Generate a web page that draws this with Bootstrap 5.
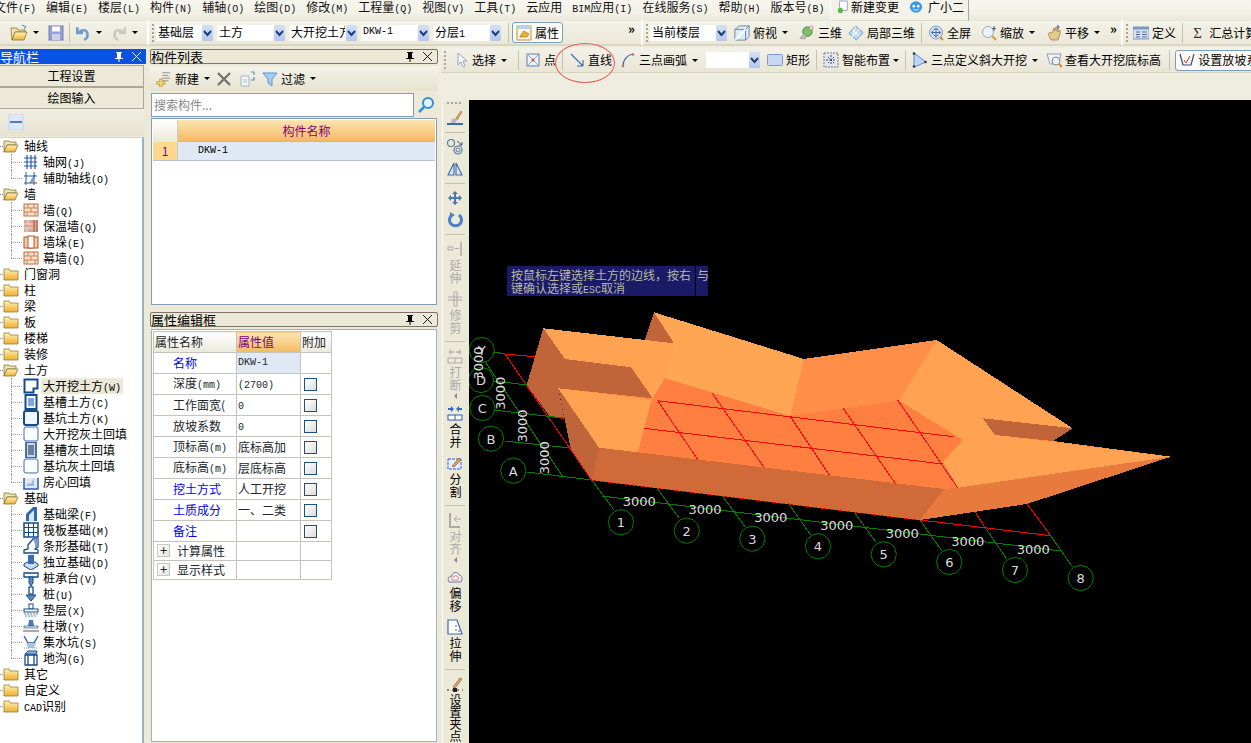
<!DOCTYPE html>
<html lang="zh-CN">

<head>
  <meta charset="UTF-8" />
  <meta name="viewport" content="width=device-width, initial-scale=1" />
  <title>土方 - 大开挖</title>
  <link href="https://cdn.jsdelivr.net/npm/bootstrap@5.3.0/dist/css/bootstrap.min.css" rel="stylesheet" />
  <style>
    html, body { height: 100%; overflow: hidden; }
    body {
      font-family: "Noto Sans CJK SC", "Liberation Sans", sans-serif;
      font-size: 12px;
      line-height: 14px;
      color: #000;
      background: #ece9d8;
    }
    .lat { font-family: "Liberation Mono", monospace; font-size: 10px; }
    .app { width: 1251px; height: 743px; overflow: hidden; position: relative; }
    .ico { width: 16px; height: 16px; flex: none; display: block; }

    /* menu */
    .menu-bar { height: 21px; background: linear-gradient(#f6f6ef, #f3f2e8 60%, #e9e7d8); white-space: nowrap; }
    .menu-list { margin-left: -6px; height: 14px; }
    .menu-item { margin-right: 10px; line-height: 14px; color: #111; }
    .menu-tab { position: absolute; left: 830px; top: 0; width: 139px; height: 21px; padding-left: 6px; gap: 2px; background: #f3f2e8; border-left: 1px solid #fff; border-right: 1px solid #aca899; border-bottom: 1px solid #d8d6c4; }
    .menu-tab .tab-doc { width: 12px; height: 14px; }
    .menu-tab .tab-bot { width: 14px; height: 14px; margin-right: 3px; }

    /* toolbars */
    .tool-row { height: 25px; background: linear-gradient(#f3f2e8, #ebe8d8); border-bottom: 2px solid #d8d5c2; white-space: nowrap; }
    .tool { padding: 0 3px; gap: 3px; height: 100%; flex: none; }
    .tool-caret { width: 0; height: 0; border: 3px solid transparent; border-top: 3px solid #000; border-bottom: 0; margin: 0 5px; flex: none; }
    .tool .tool-caret { margin: 0 5px 0 2px; }
    .tool .caret-snug { margin: 0; }
    .tool .caret-tail { margin: 0 2px 0 2px; }
    .tool-sep { width: 1px; height: 20px; background: #c5c2b0; margin: 0 5px; flex: none; }
    .sep-tight { margin: 0 3px; }
    .tool-gap { width: 2px; height: 25px; background: #fff; margin: 0 1px; flex: none; }
    .grip { width: 2px; height: 18px; margin: 0 2px; flex: none; background: repeating-linear-gradient(#a8a690 0 2px, transparent 2px 4px); }
    .strip-grip { margin-right: 4px; }
    .nudge { margin-left: 2px; }
    .chev { width: 8px; color: #000; font-size: 13px; font-weight: 700; line-height: 10px; margin-top: -8px; flex: none; }
    .chev-a { margin-left: 65px; margin-right: 4px; }
    .chev-b { margin-left: 2px; margin-right: 2px; }
    .sigma { width: 13px; font-size: 15px; font-family: "Liberation Serif", serif; color: #333; flex: none; }
    .cbx { height: 16px; background: #fff; padding-left: 2px; margin-right: 4px; flex: none; overflow: hidden; white-space: nowrap; justify-content: space-between; }
    .cbx-text { overflow: hidden; }
    .cbx-arrow { width: 11px; height: 16px; flex: none; margin-left: 1px; background: linear-gradient(#d5e0f5, #b4c8ec); border-radius: 1px; }
    .cbx-57 { width: 57px; }
    .cbx-68 { width: 68px; }
    .cbx-77 { width: 77px; }
    .cbx-54 { width: 54px; padding: 0; }
    .tool-on { border: 1px solid #7c9bbd; border-radius: 3px; background: #fbfaf4; height: 21px; padding: 0 3px; }
    .first-tools { padding-left: 10px; width: 146px; flex: none; }
    .open-ico { width: 18px; height: 18px; flex: none; }
    .undo-ico { color: #6c9bd2; }
    .redo-ico { color: #c8c8c0; }
    .save-ico { opacity: .8; }

    /* panes */
    .work { height: 697px; }
    .pane-title { height: 15px; line-height: 14px; font-size: 13px; margin-top: 3px; padding-right: 4px; background: #ece9d8; border: 1px solid #77766a; border-radius: 2px; white-space: nowrap; }
    .pane-title .pin { width: 12px; height: 12px; margin-right: 6px; }
    .pane-title .shut { width: 11px; height: 11px; }
    .pane-title.hot { background: #0a52e4; color: #fff; border: 0; border-radius: 0; height: 15px; }
    .nav-pane { width: 146px; flex: none; }
    .nav-btn { height: 22px; width: 144px; line-height: 20px; text-align: center; background: #ece9d8; border: 1px solid #aca899; border-left: 0; }
    .nav-btn-first { margin-top: 1px; }
    .nav-tools { height: 27px; width: 144px; background: linear-gradient(#f1efe3, #e6e3d0); padding: 5px 8px; }
    .nav-tree-box { height: 609px; width: 144px; margin-top: 1px; background: #fff; border-top: 1px solid #d5d3c3; border-right: 2px solid #9cb0c6; overflow: hidden; }
    .tree-row { height: 16px; line-height: 16px; position: relative; gap: 5px; padding-left: 3px; white-space: nowrap; }
    .tree-row::before { content: ""; position: absolute; left: 0; top: 8px; width: 3px; border-top: 1px dotted #999; }
    .tree-kid { padding-left: 23px; gap: 4px; }
    .tree-kid::before { left: 11px; width: 11px; }
    .tree-kid::after { content: ""; position: absolute; left: 11px; top: 0; height: 16px; border-left: 1px dotted #999; }
    .tree-kid:last-child::after { height: 8px; }
    .tree-on { background: #ece9d8; padding: 0 2px; margin-left: -2px; }

    .mid-pane { width: 288px; margin-left: 4px; flex: none; }
    .list-tools { height: 25px; margin-top: 2px; background: linear-gradient(#f4f3ea, #e6e3d0); padding-left: 3px; }
    .list-tools .tool .caret-end { margin-right: 0; }
    .search-row { height: 26px; padding-top: 1px; }
    .search-box { width: 263px; height: 24px; margin-left: 1px; background: #fff; border: 1px solid #7f9db9; line-height: 22px; padding-left: 2px; color: #888; }
    .search-go { margin-left: 3px; width: 18px; height: 18px; }
    .list-box { height: 187px; margin: 1px 1px 0; background: #fff; border: 1px solid #7f9db9; padding: 1px; }
    .part-head { height: 22px; }
    .part-corner { width: 25px; background: linear-gradient(#fff, #ece9d8); border-right: 1px solid #ccc; }
    .part-col { flex: 1; text-align: center; line-height: 21px; color: #800080; background: linear-gradient(#fde5b2, #f2ba64); border-bottom: 1px solid #bbb; }
    .part-row { height: 19px; line-height: 18px; border-bottom: 1px solid #b9c3d0; }
    .part-num { width: 25px; text-align: center; color: #800080; background: #fdd78e; border-right: 1px solid #ccc; }
    .part-name { flex: 1; padding-left: 20px; background: #dfe8f4; }
    .prop-title { margin-top: 7px; }
    .prop-box { height: 413px; margin: 2px 1px 0; background: #fff; border: 1px solid #9cb0c6; padding: 1px; }
    .prop-grid { width: 178px; table-layout: fixed; margin: 0; border-collapse: collapse; }
    .col-name { width: 83px; }
    .col-value { width: 64px; }
    .col-extra { width: 31px; }
    .prop-grid td { height: 21px; padding: 0 1px; line-height: 16px; border: 1px solid #c4c4bf; overflow: hidden; white-space: nowrap; vertical-align: middle; box-shadow: none; background: transparent; }
    .prop-grid .short td { height: 19px; }
    .prop-head-a { background: linear-gradient(#fff, #ebe9dc) !important; }
    .prop-head-b { background: linear-gradient(#fde5b2, #f2ba64) !important; color: #800080; }
    .prop-name { padding-left: 19px !important; }
    .prop-blue { color: #00f; }
    .prop-sel { background: #dfe8f4 !important; }
    .prop-check { display: block; width: 13px; height: 13px; margin-left: 2px; border: 1px solid #1c5180; background: linear-gradient(135deg, #fff, #dcdcd7); }
    .prop-plus { width: 13px; height: 13px; float: left; margin: 1px 7px 0 2px; border: 1px solid #c8c8c0; background: linear-gradient(135deg, #fff, #e4e4dc); line-height: 9px; text-align: center; font-size: 13px; }

    .draw-pane { width: 813px; flex: none; }
    .draw-tools { height: 54px; background: #efede0; padding-top: 2px; }
    .draw-strip { height: 25px; margin-left: 4px; background: linear-gradient(#f3f2e8, #e9e6d6); border-bottom: 1px solid #d5d2bf; white-space: nowrap; overflow: hidden; }
    .draw-body { height: 643px; }
    .vert-tools { width: 31px; flex: none; padding-left: 4px; background: #ece9d8; }
    .vert-in { width: 25px; border-left: 1px solid #fbfaf4; }
    .vert-grip { height: 2px; width: 16px; margin: 2px 0 3px; background: repeating-linear-gradient(90deg, #a8a690 0 2px, transparent 2px 4px); }
    .vert-tool { padding: 3px 0; }
    .vert-word { writing-mode: vertical-rl; line-height: 14px; letter-spacing: 1px; margin-top: 2px; }
    .vert-word-long { letter-spacing: 0; }
    .vert-off { color: #aaa; }
    .vert-sep { width: 20px; height: 1px; margin: 3px 0; background: #c5c2b0; flex: none; }
    .vert-caret { width: 0; height: 0; border: 3px solid transparent; border-right: 3px solid #888; border-left: 0; margin-top: 1px; }
    .draw-board { width: 782px; height: 643px; background: #000; position: relative; overflow: hidden; }
    .draw-board svg { display: block; }
    .board-word { font-family: "DejaVu Sans", sans-serif; font-size: 13px; fill: #ddd; }
    .tip-box { position: absolute; left: 38px; top: 166px; width: 201px; height: 30px; padding: 2px 4px; line-height: 13px; background: #1a1a66; color: #b8b8a4; white-space: nowrap; overflow: hidden; }
    .tip-box::after { content: ""; position: absolute; left: 188px; top: 0; bottom: 0; border-left: 1px solid #000; }
    .tip-tail { position: absolute; left: 190px; top: 2px; }
    .mark-ring { position: absolute; left: 555px; top: 43px; width: 60px; height: 40px; border: 1px solid #e8605a; border-radius: 50%; pointer-events: none; }
  </style>
</head>

<body>
  <svg width="0" height="0" class="position-absolute">
    <defs>
      <linearGradient id="gy" x1="0" y1="0" x2="0" y2="1"><stop offset="0" stop-color="#fff3b8" /><stop offset="1" stop-color="#eeb02e" /></linearGradient>
      <symbol id="i-fc" viewBox="0 0 16 16"><path d="M1 3h5l1 2h8v9H1z" fill="url(#gy)" stroke="#9a7c32" stroke-width=".8" /></symbol>
      <symbol id="i-fo" viewBox="0 0 16 16"><path d="M1 3h5l1 1h6v3H4l-3 7z" fill="#efe2b8" stroke="#8a7636" stroke-width=".8" /><path d="M4 7h11l-3 7H1z" fill="url(#gy)" stroke="#8a7636" stroke-width=".8" /></symbol>
      <symbol id="i-grid" viewBox="0 0 16 16"><path d="M1 4h13M1 8h13M1 12h13M4 1v14M8 1v14M12 1v14" stroke="#2a5db0" stroke-width="1.2" fill="none" /></symbol>
      <symbol id="i-aux" viewBox="0 0 16 16"><path d="M1 6h13M1 13h13M3 2v13M11 2v13" stroke="#2a5db0" fill="none" /><path d="M7 13l5-8" stroke="#2a5db0" /><rect x="8" y="9" width="3" height="4" fill="#999" /></symbol>
      <symbol id="i-brick" viewBox="0 0 16 16"><rect x="1" y="2" width="14" height="12" fill="#fbe3d0" stroke="#c06a3a" /><path d="M1 6h14M1 10h14M5 2v4M11 2v4M8 6v4M4 10v4M12 10v4" stroke="#d07a4a" /></symbol>
      <symbol id="i-warm" viewBox="0 0 16 16"><rect x="1" y="2" width="14" height="12" fill="#d9a79a" /><path d="M1 6h9M1 10h9M5 2v4M4 10v4" stroke="#f1ddd6" /><path d="M11 2v12M14 2v12" stroke="#b0502a" /></symbol>
      <symbol id="i-pier" viewBox="0 0 16 16"><rect x="1" y="3" width="14" height="11" fill="#f7c9a8" stroke="#a8562a" /><rect x="5" y="2" width="6" height="12" fill="#fff" stroke="#b8582c" /></symbol>
      <symbol id="i-pit" viewBox="0 0 16 16"><path d="M1.500 1.500h13v9h-4v4h-9z" fill="#fff" stroke="#174a8c" stroke-width="2" /></symbol>
      <symbol id="i-slot" viewBox="0 0 16 16"><rect x="2.500" y="1" width="11" height="14" fill="#fff" stroke="#174a8c" stroke-width="2" /><rect x="5" y="4" width="6" height="8" fill="#7ea6d8" /></symbol>
      <symbol id="i-hole" viewBox="0 0 16 16"><rect x="1" y="1" width="14" height="14" rx="2" fill="#f2f6fc" stroke="#174a8c" stroke-width="2" /></symbol>
      <symbol id="i-holeb" viewBox="0 0 16 16"><rect x="1" y="1" width="14" height="14" rx="2" fill="#fafcff" stroke="#3a6cb0" /></symbol>
      <symbol id="i-slotd" viewBox="0 0 16 16"><rect x="3" y="0" width="10" height="16" fill="#c9d8ee" stroke="#174a8c" stroke-width="1.500" /><rect x="5" y="3" width="6" height="10" fill="#6f7f98" /></symbol>
      <symbol id="i-room" viewBox="0 0 16 16"><path d="M1 4v11h14V4" fill="#dfe9f6" stroke="#2a5db0" stroke-width="1.500" /><path d="M3 12l3-3 2 1 3-6v8z" fill="#9fb4d2" /></symbol>
      <symbol id="i-beam" viewBox="0 0 16 16"><path d="M3 15V8l7-7h4v14z" fill="#2e67b4" /><path d="M6 15V9l5-5v11z" fill="#dce7f6" /></symbol>
      <symbol id="i-raft" viewBox="0 0 16 16"><rect x="1" y="1" width="14" height="14" fill="#fff" stroke="#174a8c" stroke-width="1.500" /><path d="M1 5.500h14M1 10.500h14M5.500 1v14M10.500 1v14" stroke="#174a8c" /></symbol>
      <symbol id="i-strip" viewBox="0 0 16 16"><path d="M1 15v-3l4-1V7l5-6h5v8l-3 2 3 1v3z" fill="#fff" stroke="#174a8c" stroke-width="1.300" /><path d="M10 1h5v7l-3 2V6z" fill="#7d9cc6" /></symbol>
      <symbol id="i-solo" viewBox="0 0 16 16"><path d="M1 10l7-4 7 4v2l-7 4-7-4z" fill="#c9dcf2" stroke="#174a8c" /><rect x="5" y="1" width="6" height="9" fill="#3a6cb0" /></symbol>
      <symbol id="i-cap" viewBox="0 0 16 16"><path d="M1 3h14v4H1z" fill="#fff" stroke="#174a8c" stroke-width="1.300" /><path d="M6 7h4v6l-2 3-2-3z" fill="#5f86bd" stroke="#174a8c" /></symbol>
      <symbol id="i-pile" viewBox="0 0 16 16"><rect x="6" y="1" width="4" height="7" fill="#fff" stroke="#174a8c" stroke-width="1.300" /><path d="M3 9h10l-5 6z" fill="#5f86bd" stroke="#174a8c" /></symbol>
      <symbol id="i-pad" viewBox="0 0 16 16"><rect x="6" y="2" width="4" height="5" fill="#fff" stroke="#174a8c" /><rect x="1" y="7" width="14" height="3" fill="#fff" stroke="#174a8c" /><path d="M1 12h14M2 14h12" stroke="#5f86bd" stroke-dasharray="2 1" /></symbol>
      <symbol id="i-stub" viewBox="0 0 16 16"><path d="M6 2h4l1 6H5z" fill="#4c78b6" /><rect x="1" y="8" width="14" height="2" fill="#dce7f6" stroke="#174a8c" stroke-width=".6" /><rect x="0" y="12" width="16" height="2" fill="#aaa" /></symbol>
      <symbol id="i-sump" viewBox="0 0 16 16"><path d="M1 2l4 7h6l4-7" fill="none" stroke="#2a5db0" stroke-width="1.300" /><path d="M3 9h10l-2 5H5z" fill="#a8c4e6" /><path d="M1 14h14" stroke="#7da0d0" stroke-dasharray="1 1" /></symbol>
      <symbol id="i-ditch" viewBox="0 0 16 16"><path d="M2 4l3-3h9l-1 3z" fill="#9bb7dd" stroke="#174a8c" /><path d="M2 5h12v10H2z" fill="#fff" stroke="#174a8c" stroke-width="1.300" /><path d="M5 5v10M11 5v10" stroke="#174a8c" stroke-width="1.300" /></symbol>
      <symbol id="i-minus" viewBox="0 0 16 16"><rect x="1" y="0" width="14" height="16" fill="#dfe8fb" stroke="#c3d2f0" /><rect x="2" y="7" width="12" height="2" fill="#4a7fb8" /></symbol>
      <symbol id="i-pin" viewBox="0 0 12 12"><path d="M3 1h6v1H8v5h2v1H6.500v3h-1V8H2V7h2V2H3z" fill="currentColor" /></symbol>
      <symbol id="i-shut" viewBox="0 0 11 11"><path d="M1 1l9 9M10 1l-9 9" stroke="currentColor" stroke-width=".9" fill="none" /></symbol>
      <symbol id="i-new" viewBox="0 0 18 18"><path d="M7 2h9M7 5h7M7 8h9M7 11h7" stroke="#8a8a8a" /><path d="M4 9h3v3h3v3H7v3H4v-3H1v-3h3z" fill="#f2d56a" stroke="#b08a20" stroke-width=".7" /></symbol>
      <symbol id="i-del" viewBox="0 0 16 16"><path d="M2 2l12 12M14 2L2 14" stroke="#707070" stroke-width="2.200" /></symbol>
      <symbol id="i-copy" viewBox="0 0 16 16"><path d="M1 5h8v10H1z" fill="#f4f4f4" stroke="#a8b4c4" /><path d="M3 9h4M3 11h4" stroke="#b8c0c8" /><path d="M11 1h3M14 1v3M11 9h3v-3" stroke="#5e8ac4" fill="none" stroke-width="1.200" /></symbol>
      <symbol id="i-filter" viewBox="0 0 16 16"><path d="M1 2h14L10 8v7l-4-3V8z" fill="#a9cdf0" stroke="#5d93cc" /></symbol>
      <symbol id="i-search" viewBox="0 0 18 18"><circle cx="11" cy="7" r="5" fill="#e4f2fc" stroke="#2f8fd8" stroke-width="2" /><path d="M7 11l-5 5" stroke="#2f8fd8" stroke-width="2.500" /></symbol>
      <symbol id="i-open" viewBox="0 0 18 18"><path d="M1 4h6l1 2h7v2H5l-3 8z" fill="#f1e4b8" stroke="#8a7636" stroke-width=".8" /><path d="M5 8h12l-3 8H2z" fill="url(#gy)" stroke="#8a7636" stroke-width=".8" /><path d="M12 1l4 2-2 2" fill="none" stroke="#4a7fb8" /></symbol>
      <symbol id="i-save" viewBox="0 0 16 16"><rect x="1" y="1" width="14" height="14" fill="#7f8ed4" stroke="#5a64a8" /><rect x="4" y="1.500" width="8" height="5" fill="#fff" /><rect x="4" y="9" width="8" height="6" fill="#c8cce8" /></symbol>
      <symbol id="i-undo" viewBox="0 0 14 14"><path d="M2 2v5h5M3 7c3-4 8-3 8 2 0 2-1 3-3 4" fill="none" stroke="currentColor" stroke-width="2.200" /></symbol>
      <symbol id="i-redo" viewBox="0 0 14 14"><path d="M12 2v5H7M11 7C8 3 3 4 3 9c0 2 1 3 3 4" fill="none" stroke="currentColor" stroke-width="2.200" /></symbol>
      <symbol id="i-props" viewBox="0 0 16 16"><rect x="1" y="1" width="14" height="14" fill="#fdf6e0" stroke="#d88a30" /><rect x="1" y="1" width="14" height="3" fill="#bcd0ea" /><path d="M4 11l4-5 5 3-2 3H4z" fill="#e8b030" stroke="#8a6a20" stroke-width=".6" /></symbol>
      <symbol id="i-cube" viewBox="0 0 18 18"><path d="M1 5l5-4h11v12l-4 4H1z" fill="#dfeaf6" stroke="#5d7f9e" /><path d="M1 5h12v12M13 5l4-4" fill="none" stroke="#5d7f9e" /><path d="M1 17l12-12" stroke="#fff" stroke-width="2" /></symbol>
      <symbol id="i-3d" viewBox="0 0 17 17"><circle cx="9" cy="7" r="5" fill="#7cc26a" stroke="#3a8a3a" /><path d="M1 14l5-5 2 3-2 3z" fill="#bcbcbc" stroke="#888" stroke-width=".6" /><circle cx="13" cy="3" r="2" fill="#eee" stroke="#c66" stroke-width=".7" /></symbol>
      <symbol id="i-part3d" viewBox="0 0 17 17"><path d="M1 9l7-8 8 7-7 8z" fill="#bcd6f0" stroke="#6d96c4" /><path d="M4.500 5l8 7M8 1.500l-3.500 11M12 4.500l-7 8" stroke="#fff" /></symbol>
      <symbol id="i-full" viewBox="0 0 16 16"><circle cx="8" cy="7.500" r="6.500" fill="#d4e2f4" stroke="#7d9ac0" /><path d="M8 3v9M3.500 7.500h9M8 3l-2 2M8 3l2 2M8 12l-2-2M8 12l2-2M3.500 7.500l2-2M3.500 7.500l2 2M12.500 7.500l-2-2M12.500 7.500l-2 2" stroke="#3a5f98" fill="none" stroke-width=".9" /><path d="M12 12l3 3" stroke="#d88a30" stroke-width="2" /></symbol>
      <symbol id="i-zoom" viewBox="0 0 16 16"><circle cx="7" cy="7" r="5.500" fill="#eef3fa" stroke="#9aa8b8" /><path d="M11 11l4 4" stroke="#d8a030" stroke-width="2.200" /><path d="M13 1v5M11 3.500h4" stroke="#506070" /></symbol>
      <symbol id="i-hand" viewBox="0 0 16 16"><path d="M2 9l3 6h7l2-6V5l-2 2V3l-2 3V2L8 6V3L6 8 4 7z" fill="#e6c98c" stroke="#9a8450" stroke-width=".8" /><path d="M12 0v4M10.500 2h3" stroke="#506070" /></symbol>
      <symbol id="i-def" viewBox="0 0 16 16"><rect x="0" y="2" width="16" height="12" fill="#d6e2f4" stroke="#7b98c0" /><rect x="0" y="2" width="16" height="2.500" fill="#7b98c0" /><path d="M3 7h4M3 9.500h4M3 12h4M9 7h5M9 9.500h5M9 12h5" stroke="#4d6a94" /></symbol>
      <symbol id="i-pick" viewBox="0 0 16 16"><path d="M5 1v12l3-3 2 5 2-1-2-5h4z" fill="#f6f6f6" stroke="#9aa6c0" /></symbol>
      <symbol id="i-point" viewBox="0 0 16 16"><rect x="2" y="2" width="12" height="12" fill="#eef2f8" stroke="#5e7fb0" /><path d="M2 2l12 12M14 2L2 14" stroke="#8ea6c8" /><circle cx="8" cy="8" r="1.500" fill="#d44" /></symbol>
      <symbol id="i-line" viewBox="0 0 16 16"><path d="M2 2l12 12M14 14V8M14 14H8" fill="none" stroke="#3d6aa8" stroke-width="1.100" /></symbol>
      <symbol id="i-arc" viewBox="0 0 16 16"><path d="M3 14C3 8 7 3 13 2" fill="none" stroke="#3d6aa8" stroke-width="1.200" /><circle cx="3" cy="14" r="1.300" fill="#d66" /><circle cx="13" cy="2.500" r="1.300" fill="#d66" /></symbol>
      <symbol id="i-rect" viewBox="0 0 16 16"><rect x=".5" y="2.500" width="15" height="11" rx="1" fill="#c6d8f2" stroke="#7d9ac6" /></symbol>
      <symbol id="i-smart" viewBox="0 0 16 16"><rect x="1" y="1" width="14" height="14" fill="#e4e8ee" stroke="#707a88" stroke-dasharray="2 1" /><path d="M8 3v10M3 8h10M5 5l6 6M11 5l-6 6" stroke="#28486e" stroke-dasharray="2 1.500" /></symbol>
      <symbol id="i-tri" viewBox="0 0 16 16"><path d="M2 1v14l12-5z" fill="#bcd8f4" stroke="#5e8ac4" /><circle cx="2" cy="1.500" r="1.300" fill="#333" /><circle cx="2" cy="14.500" r="1.300" fill="#333" /><circle cx="13.500" cy="10" r="1.300" fill="#333" /></symbol>
      <symbol id="i-check" viewBox="0 0 16 16"><path d="M1 2h14l-3 10H4z" fill="#f1f4f8" stroke="#88a0bc" /><circle cx="10" cy="9" r="4" fill="#eef3fa" stroke="#7d8a9a" /><path d="M13 12l3 3" stroke="#d88a30" stroke-width="2" /></symbol>
      <symbol id="i-slope" viewBox="0 0 16 16"><path d="M1 2l3 11h8l3-11" fill="none" stroke="#2a5080" stroke-width="1.200" /><path d="M5 8l2 3 4-7" fill="none" stroke="#d83030" /></symbol>
      <symbol id="i-brush" viewBox="0 0 16 16"><path d="M9 8l5-7 1 1-5 8z" fill="#e8a050" stroke="#9a6a30" stroke-width=".6" /><path d="M5 9l4-1 1 2-2 3H4z" fill="#b0b8c8" /><path d="M0 14h16" stroke="#3d6aa8" stroke-width="2" /></symbol>
      <symbol id="i-offs" viewBox="0 0 16 16"><circle cx="4" cy="4" r="3.500" fill="none" stroke="#5a7aa8" stroke-width="1.200" /><circle cx="11" cy="11" r="4" fill="none" stroke="#5a7aa8" stroke-width="1.200" /><circle cx="11" cy="11" r="2" fill="none" stroke="#5a7aa8" /><path d="M10 2l5 4M15 3v3h-3" fill="none" stroke="#3d5a88" /></symbol>
      <symbol id="i-mirror" viewBox="0 0 16 16"><path d="M7 2v12H1zM9 2v12h6z" fill="#dce7f6" stroke="#3d6aa8" stroke-width="1.100" /></symbol>
      <symbol id="i-move" viewBox="0 0 16 16"><path d="M8 1l3 3H9v3h3V5l3 3-3 3V9H9v3h2l-3 3-3-3h2V9H4v2L1 8l3-3v2h3V4H5z" fill="#4a78b4" /></symbol>
      <symbol id="i-spin" viewBox="0 0 16 16"><path d="M5 3a6 6 0 1 0 7 0" fill="none" stroke="#4a7fcc" stroke-width="3" /><path d="M3 0l5 3-5 3z" fill="#4a7fcc" /></symbol>
      <symbol id="i-ext" viewBox="0 0 16 16"><path d="M14 1v14" stroke="#aaa" stroke-width="1.500" /><path d="M1 6h5v3H1zM8 7.500h4" stroke="#aaa" fill="none" /></symbol>
      <symbol id="i-trim" viewBox="0 0 16 16"><rect x="7" y="1" width="3" height="14" fill="none" stroke="#aaa" /><path d="M1 6h14M1 9h14" stroke="#aaa" /></symbol>
      <symbol id="i-break" viewBox="0 0 16 16"><path d="M1 4l3-3v2h3v2H4v2zM15 4l-3-3v2H9v2h3v2z" fill="#bbb" /><rect x="1" y="10" width="14" height="5" fill="none" stroke="#aaa" /><path d="M8 10v5" stroke="#aaa" /></symbol>
      <symbol id="i-join" viewBox="0 0 16 16"><path d="M1 3h3V1l3 3-3 3V5H1zM15 3h-3V1L9 4l3 3V5h3z" fill="#2a70c8" /><rect x="1" y="10" width="14" height="5" fill="#fff" stroke="#2a5db0" /><path d="M8 10v5" stroke="#2a5db0" /></symbol>
      <symbol id="i-split" viewBox="0 0 16 16"><rect x="1" y="4" width="13" height="10" fill="#e8f0fc" stroke="#2060e0" stroke-dasharray="3 1" /><path d="M5 11l7-8 2 2-7 7z" fill="#e8a050" stroke="#7a5a30" stroke-width=".7" /></symbol>
      <symbol id="i-align" viewBox="0 0 16 16"><path d="M3 1v14h10" fill="none" stroke="#aaa" stroke-width="2" /><path d="M7 7h7M7 7l3-3M7 7l3 3" stroke="#aaa" fill="none" /></symbol>
      <symbol id="i-cloud" viewBox="0 0 16 16"><path d="M2 13c-2-3 0-6 3-6 0-4 6-5 7-1 3 0 4 4 2 7z" fill="#fbeaea" stroke="#5a80b0" /><path d="M5 11c-1-2 0-3 2-3 1-2 3-2 3 0 2 0 2 2 1 3z" fill="#fff" stroke="#d88080" /></symbol>
      <symbol id="i-pull" viewBox="0 0 16 16"><path d="M1 1h9l5 14H1z" fill="#fff" stroke="#3d6aa8" stroke-width="1.200" /><path d="M9 6v2M9 10v2M11 12h2" stroke="#666" /></symbol>
      <symbol id="i-grab" viewBox="0 0 16 16"><path d="M6 11l7-9 2 1-7 9z" fill="#e8b060" stroke="#7a5a30" stroke-width=".7" /><path d="M0 14h16" stroke="#222" stroke-dasharray="2 3" /><rect x="6" y="12" width="4" height="4" fill="#222" /></symbol>
      <symbol id="i-doc" viewBox="0 0 14 14"><path d="M3 0h9v11H3z" fill="#fff" stroke="#88a0bc" /><circle cx="4" cy="11" r="3" fill="#5ab84a" /></symbol>
      <symbol id="i-bot" viewBox="0 0 16 16"><ellipse cx="8" cy="8" rx="7" ry="6.500" fill="#3a9ae8" /><circle cx="5.500" cy="7" r="1.500" fill="#fff" /><circle cx="10.500" cy="7" r="1.500" fill="#fff" /><path d="M5 10.500c2 1.500 4 1.500 6 0" fill="none" stroke="#fff" /></symbol>
      <symbol id="i-chev" viewBox="0 0 11 16"><path d="M2 6l3.500 4L9 6" fill="none" stroke="#1c3f78" stroke-width="2" /></symbol>
    </defs>
  </svg>

  <div class="app">
    <div class="menu-bar">
      <div class="menu-list d-flex">
        <span class="menu-item">文件<span class="lat">(F)</span></span>
        <span class="menu-item">编辑<span class="lat">(E)</span></span>
        <span class="menu-item">楼层<span class="lat">(L)</span></span>
        <span class="menu-item">构件<span class="lat">(N)</span></span>
        <span class="menu-item">辅轴<span class="lat">(O)</span></span>
        <span class="menu-item">绘图<span class="lat">(D)</span></span>
        <span class="menu-item">修改<span class="lat">(M)</span></span>
        <span class="menu-item">工程量<span class="lat">(Q)</span></span>
        <span class="menu-item">视图<span class="lat">(V)</span></span>
        <span class="menu-item">工具<span class="lat">(T)</span></span>
        <span class="menu-item">云应用</span>
        <span class="menu-item"><span class="lat">BIM</span>应用<span class="lat">(I)</span></span>
        <span class="menu-item">在线服务<span class="lat">(S)</span></span>
        <span class="menu-item">帮助<span class="lat">(H)</span></span>
        <span class="menu-item">版本号<span class="lat">(B)</span></span>
      </div>
      <div class="menu-tab d-flex align-items-start">
        <svg class="tab-doc"><use href="#i-doc" /></svg><span class="me-2">新建变更</span>
        <svg class="tab-bot"><use href="#i-bot" /></svg><span>广小二</span>
      </div>
    </div>

    <div class="tool-row d-flex align-items-center">
      <div class="first-tools d-flex align-items-center">
        <svg class="open-ico"><use href="#i-open" /></svg>
        <span class="tool-caret"></span>
        <svg class="ico save-ico ms-1"><use href="#i-save" /></svg>
        <span class="tool-sep"></span>
        <svg class="ico undo-ico"><use href="#i-undo" /></svg>
        <span class="tool-caret"></span>
        <svg class="ico redo-ico ms-1"><use href="#i-redo" /></svg>
        <span class="tool-caret"></span>
      </div>
      <span class="tool-gap"></span>
      <span class="grip"></span>
      <div class="cbx cbx-57 d-flex"><span class="cbx-text">基础层</span><svg class="cbx-arrow"><use href="#i-chev" /></svg></div>
      <div class="cbx cbx-68 d-flex"><span class="cbx-text">土方</span><svg class="cbx-arrow"><use href="#i-chev" /></svg></div>
      <div class="cbx cbx-68 d-flex"><span class="cbx-text">大开挖土方</span><svg class="cbx-arrow"><use href="#i-chev" /></svg></div>
      <div class="cbx cbx-68 d-flex"><span class="cbx-text lat">DKW-1</span><svg class="cbx-arrow"><use href="#i-chev" /></svg></div>
      <div class="cbx cbx-68 d-flex"><span class="cbx-text">分层<span class="lat">1</span></span><svg class="cbx-arrow"><use href="#i-chev" /></svg></div>
      <span class="tool-sep sep-tight"></span>
      <div class="tool tool-on d-flex align-items-center"><svg class="ico"><use href="#i-props" /></svg><span>属性</span></div>
      <span class="chev chev-a">»</span>
      <span class="tool-gap"></span>
      <span class="grip"></span>
      <div class="cbx cbx-77 d-flex"><span class="cbx-text">当前楼层</span><svg class="cbx-arrow"><use href="#i-chev" /></svg></div>
      <div class="tool d-flex align-items-center"><svg class="ico"><use href="#i-cube" /></svg><span>俯视</span><span class="tool-caret"></span></div>
      <div class="tool d-flex align-items-center"><svg class="ico"><use href="#i-3d" /></svg><span>三维</span></div>
      <div class="tool d-flex align-items-center"><svg class="ico"><use href="#i-part3d" /></svg><span>局部三维</span></div>
      <span class="tool-sep sep-tight"></span>
      <div class="tool d-flex align-items-center"><svg class="ico"><use href="#i-full" /></svg><span>全屏</span></div>
      <div class="tool d-flex align-items-center ms-1"><svg class="ico"><use href="#i-zoom" /></svg><span>缩放</span><span class="tool-caret"></span></div>
      <div class="tool d-flex align-items-center"><svg class="ico"><use href="#i-hand" /></svg><span>平移</span><span class="tool-caret"></span></div>
      <span class="chev chev-b">»</span>
      <span class="tool-gap"></span>
      <span class="grip"></span>
      <div class="tool d-flex align-items-center"><svg class="ico"><use href="#i-def" /></svg><span>定义</span></div>
      <span class="tool-sep sep-tight"></span>
      <div class="tool d-flex align-items-center"><span class="sigma ms-1">Σ</span><span>汇总计算</span></div>
    </div>

    <div class="work d-flex">
      <aside class="nav-pane">
        <div class="pane-title hot d-flex align-items-center"><span class="flex-grow-1">导航栏</span><svg class="pin"><use href="#i-pin" /></svg><svg class="shut"><use href="#i-shut" /></svg></div>
        <div class="nav-btn nav-btn-first">工程设置</div>
        <div class="nav-btn">绘图输入</div>
        <div class="nav-tools"><svg class="ico"><use href="#i-minus" /></svg></div>
        <div class="nav-tree-box">
          <ul class="list-unstyled mb-0">
            <li>
              <div class="tree-row d-flex"><svg class="ico"><use href="#i-fo" /></svg><span>轴线</span></div>
              <ul class="list-unstyled mb-0">
                <li class="tree-row tree-kid d-flex"><svg class="ico"><use href="#i-grid" /></svg><span>轴网<span class="lat">(J)</span></span></li>
                <li class="tree-row tree-kid d-flex"><svg class="ico"><use href="#i-aux" /></svg><span>辅助轴线<span class="lat">(O)</span></span></li>
              </ul>
            </li>
            <li>
              <div class="tree-row d-flex"><svg class="ico"><use href="#i-fo" /></svg><span>墙</span></div>
              <ul class="list-unstyled mb-0">
                <li class="tree-row tree-kid d-flex"><svg class="ico"><use href="#i-brick" /></svg><span>墙<span class="lat">(Q)</span></span></li>
                <li class="tree-row tree-kid d-flex"><svg class="ico"><use href="#i-warm" /></svg><span>保温墙<span class="lat">(Q)</span></span></li>
                <li class="tree-row tree-kid d-flex"><svg class="ico"><use href="#i-pier" /></svg><span>墙垛<span class="lat">(E)</span></span></li>
                <li class="tree-row tree-kid d-flex"><svg class="ico"><use href="#i-brick" /></svg><span>幕墙<span class="lat">(Q)</span></span></li>
              </ul>
            </li>
            <li class="tree-row d-flex"><svg class="ico"><use href="#i-fc" /></svg><span>门窗洞</span></li>
            <li class="tree-row d-flex"><svg class="ico"><use href="#i-fc" /></svg><span>柱</span></li>
            <li class="tree-row d-flex"><svg class="ico"><use href="#i-fc" /></svg><span>梁</span></li>
            <li class="tree-row d-flex"><svg class="ico"><use href="#i-fc" /></svg><span>板</span></li>
            <li class="tree-row d-flex"><svg class="ico"><use href="#i-fc" /></svg><span>楼梯</span></li>
            <li class="tree-row d-flex"><svg class="ico"><use href="#i-fc" /></svg><span>装修</span></li>
            <li>
              <div class="tree-row d-flex"><svg class="ico"><use href="#i-fo" /></svg><span>土方</span></div>
              <ul class="list-unstyled mb-0">
                <li class="tree-row tree-kid d-flex"><svg class="ico"><use href="#i-pit" /></svg><span class="tree-on">大开挖土方<span class="lat">(W)</span></span></li>
                <li class="tree-row tree-kid d-flex"><svg class="ico"><use href="#i-slot" /></svg><span>基槽土方<span class="lat">(C)</span></span></li>
                <li class="tree-row tree-kid d-flex"><svg class="ico"><use href="#i-hole" /></svg><span>基坑土方<span class="lat">(K)</span></span></li>
                <li class="tree-row tree-kid d-flex"><svg class="ico"><use href="#i-holeb" /></svg><span>大开挖灰土回填</span></li>
                <li class="tree-row tree-kid d-flex"><svg class="ico"><use href="#i-slotd" /></svg><span>基槽灰土回填</span></li>
                <li class="tree-row tree-kid d-flex"><svg class="ico"><use href="#i-holeb" /></svg><span>基坑灰土回填</span></li>
                <li class="tree-row tree-kid d-flex"><svg class="ico"><use href="#i-room" /></svg><span>房心回填</span></li>
              </ul>
            </li>
            <li>
              <div class="tree-row d-flex"><svg class="ico"><use href="#i-fo" /></svg><span>基础</span></div>
              <ul class="list-unstyled mb-0">
                <li class="tree-row tree-kid d-flex"><svg class="ico"><use href="#i-beam" /></svg><span>基础梁<span class="lat">(F)</span></span></li>
                <li class="tree-row tree-kid d-flex"><svg class="ico"><use href="#i-raft" /></svg><span>筏板基础<span class="lat">(M)</span></span></li>
                <li class="tree-row tree-kid d-flex"><svg class="ico"><use href="#i-strip" /></svg><span>条形基础<span class="lat">(T)</span></span></li>
                <li class="tree-row tree-kid d-flex"><svg class="ico"><use href="#i-solo" /></svg><span>独立基础<span class="lat">(D)</span></span></li>
                <li class="tree-row tree-kid d-flex"><svg class="ico"><use href="#i-cap" /></svg><span>桩承台<span class="lat">(V)</span></span></li>
                <li class="tree-row tree-kid d-flex"><svg class="ico"><use href="#i-pile" /></svg><span>桩<span class="lat">(U)</span></span></li>
                <li class="tree-row tree-kid d-flex"><svg class="ico"><use href="#i-pad" /></svg><span>垫层<span class="lat">(X)</span></span></li>
                <li class="tree-row tree-kid d-flex"><svg class="ico"><use href="#i-stub" /></svg><span>柱墩<span class="lat">(Y)</span></span></li>
                <li class="tree-row tree-kid d-flex"><svg class="ico"><use href="#i-sump" /></svg><span>集水坑<span class="lat">(S)</span></span></li>
                <li class="tree-row tree-kid d-flex"><svg class="ico"><use href="#i-ditch" /></svg><span>地沟<span class="lat">(G)</span></span></li>
              </ul>
            </li>
            <li class="tree-row d-flex"><svg class="ico"><use href="#i-fc" /></svg><span>其它</span></li>
            <li class="tree-row d-flex"><svg class="ico"><use href="#i-fc" /></svg><span>自定义</span></li>
            <li class="tree-row d-flex"><svg class="ico"><use href="#i-fc" /></svg><span><span class="lat">CAD</span>识别</span></li>
          </ul>
        </div>
      </aside>

      <section class="mid-pane">
        <div class="pane-title d-flex align-items-center"><span class="flex-grow-1">构件列表</span><svg class="pin"><use href="#i-pin" /></svg><svg class="shut"><use href="#i-shut" /></svg></div>
        <div class="list-tools d-flex align-items-center">
          <div class="tool d-flex align-items-center"><svg class="ico"><use href="#i-new" /></svg><span>新建</span><span class="tool-caret caret-end"></span></div>
          <div class="tool d-flex align-items-center"><svg class="ico"><use href="#i-del" /></svg></div>
          <div class="tool d-flex align-items-center nudge"><svg class="ico"><use href="#i-copy" /></svg></div>
          <div class="tool d-flex align-items-center"><svg class="ico"><use href="#i-filter" /></svg><span>过滤</span><span class="tool-caret"></span></div>
        </div>
        <div class="search-row d-flex align-items-center">
          <div class="search-box">搜索构件...</div>
          <svg class="search-go"><use href="#i-search" /></svg>
        </div>
        <div class="list-box">
          <div class="part-head d-flex"><div class="part-corner"></div><div class="part-col">构件名称</div></div>
          <div class="part-row d-flex"><div class="part-num">1</div><div class="part-name lat">DKW-1</div></div>
        </div>
        <div class="pane-title prop-title d-flex align-items-center"><span class="flex-grow-1">属性编辑框</span><svg class="pin"><use href="#i-pin" /></svg><svg class="shut"><use href="#i-shut" /></svg></div>
        <div class="prop-box">
          <table class="table prop-grid">
            <colgroup><col class="col-name" /><col class="col-value" /><col class="col-extra" /></colgroup>
            <tbody>
              <tr><td class="prop-head-a">属性名称</td><td class="prop-head-b">属性值</td><td class="prop-head-a">附加</td></tr>
              <tr><td class="prop-name prop-blue">名称</td><td class="prop-sel lat">DKW-1</td><td></td></tr>
              <tr><td class="prop-name">深度<span class="lat">(mm)</span></td><td><span class="lat">(2700)</span></td><td><span class="prop-check"></span></td></tr>
              <tr><td class="prop-name">工作面宽(</td><td><span class="lat">0</span></td><td><span class="prop-check"></span></td></tr>
              <tr><td class="prop-name">放坡系数</td><td><span class="lat">0</span></td><td><span class="prop-check"></span></td></tr>
              <tr><td class="prop-name">顶标高<span class="lat">(m)</span></td><td>底标高加</td><td><span class="prop-check"></span></td></tr>
              <tr><td class="prop-name">底标高<span class="lat">(m)</span></td><td>层底标高</td><td><span class="prop-check"></span></td></tr>
              <tr><td class="prop-name prop-blue">挖土方式</td><td>人工开挖</td><td><span class="prop-check"></span></td></tr>
              <tr><td class="prop-name prop-blue">土质成分</td><td>一、二类</td><td><span class="prop-check"></span></td></tr>
              <tr><td class="prop-name prop-blue">备注</td><td></td><td><span class="prop-check"></span></td></tr>
              <tr class="short"><td><span class="prop-plus">+</span>计算属性</td><td></td><td></td></tr>
              <tr class="short"><td><span class="prop-plus">+</span>显示样式</td><td></td><td></td></tr>
            </tbody>
          </table>
        </div>
      </section>

      <section class="draw-pane d-flex flex-column">
        <div class="draw-tools">
          <div class="draw-strip d-flex align-items-center">
            <span class="grip strip-grip"></span>
            <div class="tool d-flex align-items-center"><svg class="ico"><use href="#i-pick" /></svg><span>选择</span><span class="tool-caret"></span></div>
            <span class="tool-sep sep-tight"></span>
            <div class="tool d-flex align-items-center"><svg class="ico"><use href="#i-point" /></svg><span>点</span></div>
            <span class="tool-sep sep-tight"></span>
            <div class="tool d-flex align-items-center"><svg class="ico"><use href="#i-line" /></svg><span>直线</span></div>
            <div class="tool d-flex align-items-center nudge"><svg class="ico"><use href="#i-arc" /></svg><span>三点画弧</span><span class="tool-caret"></span></div>
            <div class="cbx cbx-54 d-flex"><span></span><svg class="cbx-arrow"><use href="#i-chev" /></svg></div>
            <div class="tool d-flex align-items-center"><svg class="ico"><use href="#i-rect" /></svg><span>矩形</span></div>
            <span class="tool-sep sep-tight"></span>
            <div class="tool d-flex align-items-center"><svg class="ico"><use href="#i-smart" /></svg><span>智能布置</span><span class="tool-caret caret-snug"></span></div>
            <span class="tool-sep sep-tight"></span>
            <div class="tool d-flex align-items-center"><svg class="ico"><use href="#i-tri" /></svg><span>三点定义斜大开挖</span><span class="tool-caret caret-tail"></span></div>
            <div class="tool d-flex align-items-center"><svg class="ico"><use href="#i-check" /></svg><span>查看大开挖底标高</span></div>
            <span class="tool-sep"></span>
            <div class="tool tool-on d-flex align-items-center"><svg class="ico"><use href="#i-slope" /></svg><span>设置放坡系数</span></div>
          </div>
        </div>
        <div class="draw-body d-flex">
          <div class="vert-tools">
            <div class="vert-in d-flex flex-column align-items-center">
              <span class="vert-grip"></span>
              <div class="vert-tool"><svg class="ico"><use href="#i-brush" /></svg></div>
              <span class="vert-sep"></span>
              <div class="vert-tool"><svg class="ico"><use href="#i-offs" /></svg></div>
              <div class="vert-tool"><svg class="ico"><use href="#i-mirror" /></svg></div>
              <span class="vert-sep"></span>
              <div class="vert-tool"><svg class="ico"><use href="#i-move" /></svg></div>
              <div class="vert-tool"><svg class="ico"><use href="#i-spin" /></svg></div>
              <span class="vert-sep"></span>
              <div class="vert-tool d-flex flex-column align-items-center vert-off"><svg class="ico"><use href="#i-ext" /></svg><span class="vert-word">延伸</span></div>
              <div class="vert-tool d-flex flex-column align-items-center vert-off"><svg class="ico"><use href="#i-trim" /></svg><span class="vert-word">修剪</span></div>
              <span class="vert-sep"></span>
              <div class="vert-tool d-flex flex-column align-items-center vert-off"><svg class="ico"><use href="#i-break" /></svg><span class="vert-word">打断</span><span class="vert-caret"></span></div>
              <div class="vert-tool d-flex flex-column align-items-center"><svg class="ico"><use href="#i-join" /></svg><span class="vert-word">合并</span></div>
              <div class="vert-tool d-flex flex-column align-items-center"><svg class="ico"><use href="#i-split" /></svg><span class="vert-word">分割</span></div>
              <span class="vert-sep"></span>
              <div class="vert-tool d-flex flex-column align-items-center vert-off"><svg class="ico"><use href="#i-align" /></svg><span class="vert-word">对齐</span><span class="vert-caret"></span></div>
              <div class="vert-tool d-flex flex-column align-items-center"><svg class="ico"><use href="#i-cloud" /></svg><span class="vert-word">偏移</span></div>
              <div class="vert-tool d-flex flex-column align-items-center"><svg class="ico"><use href="#i-pull" /></svg><span class="vert-word">拉伸</span></div>
              <span class="vert-sep"></span>
              <div class="vert-tool d-flex flex-column align-items-center"><svg class="ico"><use href="#i-grab" /></svg><span class="vert-word vert-word-long">设置夹点</span></div>
            </div>
          </div>
          <div class="draw-board">
            <!-- coordinates are window pixels, so the viewBox starts where the board starts -->
            <svg width="782" height="643" viewBox="469 100 782 643">
              <defs>
                <polygon id="axis-ring" points="12.700,0 11,6.400 6.400,11 0,12.700 -6.400,11 -11,6.400 -12.700,0 -11,-6.400 -6.400,-11 0,-12.700 6.400,-11 11,-6.400" fill="#000" stroke="#008000" />
              </defs>
              <g shape-rendering="crispEdges">
                <path d="M591.700 480L920 520L1050.700 535.700L1026.700 503.300M505 354L591.700 480M505 354L535 356.700M550 416.700L564 418.300M975 511.700L985 527.300" stroke="#f00" fill="none" />
                <polygon points="526.700,385 543.300,328.300 645,340 654,312.300 804,359 936.700,340 1072.700,428.300 1053,441 1171,456.700 1026.700,504 920,520 591.700,480 570.700,448.300 558.300,388.300 564,418 550,416.700" fill="#ff8e48" />
                <polygon points="654,312.300 804,359 790,416 665,378.300 674,343.300" fill="#ffa655" />
                <polygon points="654,312.300 674,343.300 645,340" fill="#c0653a" />
                <polygon points="804,359 936.700,340 899,400.700 790,416" fill="#ff8e48" />
                <polygon points="936.700,340 1072.700,428.300 1053,441 995,435 982.700,418.300 963,440 899,400.700" fill="#ffa352" />
                <polygon points="982.700,418.300 1072.700,428.300 1053,441 995,435" fill="#c0653a" />
                <polygon points="665,378.300 790,416 899,400.700 963,440 943,462 958,488 944,489 637.700,452.300 651.700,400" fill="#ff7f40" />
                <polygon points="599,447.700 637.700,452.300 944,489 920,520 591.700,480" fill="#d06a38" />
                <polygon points="944,489 958,487.700 1171,456.700 1026.700,504 920,520" fill="#e97a3d" />
                <polygon points="982.700,418.300 995,435 1171,456.700 958,487.700 943,461.700" fill="#ffa352" />
                <polygon points="543.300,328.300 674,343.300 665,378.300 651.700,400 631,367.300 565,359" fill="#ffa352" />
                <polygon points="543.300,328.300 565,359 631,367.300 652.700,398.300 558.300,388.300 564,418 550,416.700 526.700,385" fill="#c0653a" />
                <polygon points="558.300,388.300 599,447.700 591.700,480 570.700,448.300" fill="#c0653a" />
                <polygon points="558.300,388.300 651.700,400 637.700,452.300 599,447.700" fill="#ffa352" />
                <path d="M657.700 400.700L953.300 436.700M644 428.300L942.700 464M657.700 400.700L698 460M712.300 393.300L764 467.300M790 416L829.300 475M843 408L895.700 484M897.700 400L957.700 487.700" stroke="#f00" fill="none" />
                <path d="M483 350L505 354M470 378L526.700 385M493 410L564 418M505 441L570 448M526.700 472L591.700 480M475 346.700L563.300 477.300M601.700 496L1061.700 551M591.700 480L614 510M656.700 487.700L679.300 518.300M722.300 495.700L745 526.700M788.300 503.300L810.700 535M854.300 512.300L876 542.300M920 520L941.700 550.700M985 527.300L1006.700 559M1050.700 535.700L1072.700 567.300" stroke="#008000" fill="none" />
              </g>
              <g>
                <use href="#axis-ring" x="621" y="522.300" /><use href="#axis-ring" x="686.700" y="530.700" /><use href="#axis-ring" x="752.300" y="538.700" /><use href="#axis-ring" x="818" y="546.300" />
                <use href="#axis-ring" x="883.700" y="554.300" /><use href="#axis-ring" x="949.300" y="562" /><use href="#axis-ring" x="1015" y="570" /><use href="#axis-ring" x="1080.700" y="578" />
                <use href="#axis-ring" x="513.300" y="470.700" /><use href="#axis-ring" x="491" y="438.700" /><use href="#axis-ring" x="482.300" y="408" /><use href="#axis-ring" x="481" y="380" /><use href="#axis-ring" x="481.700" y="350" />
              </g>
              <g class="board-word" text-anchor="middle">
                <text x="621" y="527">1</text><text x="686.700" y="535.500">2</text><text x="752.300" y="543.500">3</text><text x="818" y="551">4</text>
                <text x="883.700" y="559">5</text><text x="949.300" y="567">6</text><text x="1015" y="575">7</text><text x="1080.700" y="583">8</text>
                <text x="513.300" y="475.500">A</text><text x="491" y="443.500">B</text><text x="482.300" y="413">C</text><text x="481" y="385">D</text><text x="481.700" y="355">Y</text>
                <text x="639.300" y="506">3000</text>
                <text x="705" y="514">3000</text>
                <text x="770.700" y="522">3000</text>
                <text x="836.700" y="530">3000</text>
                <text x="902.300" y="538">3000</text>
                <text x="967.700" y="546">3000</text>
                <text x="1033.300" y="554">3000</text>
                <text transform="translate(549 457.700) rotate(-90)">3000</text>
                <text transform="translate(526.700 426) rotate(-90)">3000</text>
                <text transform="translate(505 393.300) rotate(-90)">3000</text>
                <text transform="translate(483 363) rotate(-90)">3000</text>
              </g>
            </svg>
            <div class="tip-box">按鼠标左键选择土方的边线，按右<span class="tip-tail">与</span><br />键确认选择或<span class="lat">ESC</span>取消</div>
          </div>
        </div>
      </section>
    </div>

    <div class="mark-ring"></div>
  </div>

  <script src="https://cdn.jsdelivr.net/npm/bootstrap@5.3.0/dist/js/bootstrap.bundle.min.js"></script>
</body>

</html>
